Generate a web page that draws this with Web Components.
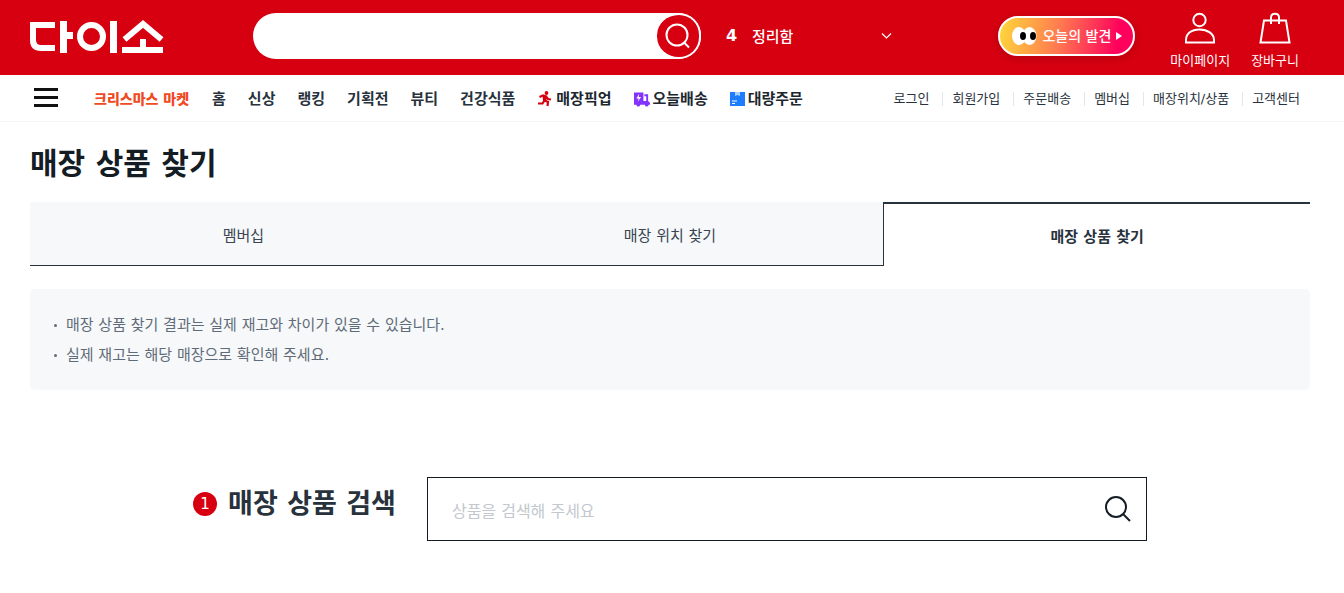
<!DOCTYPE html>
<html lang="ko">
<head>
<meta charset="utf-8">
<meta name="viewport" content="width=device-width, initial-scale=1">
<title>매장 상품 찾기 | 다이소</title>
<style>
body { margin: 0; background: #fff; color: #28323c; font: 15px/22px "DejaVu Sans", "Noto Sans CJK KR", sans-serif; }
</style>
</head>
<body>
<store-header></store-header>
<store-nav></store-nav>
<store-page heading="매장 상품 찾기">
  <page-tabs>
    <page-tab>멤버십</page-tab>
    <page-tab>매장 위치 찾기</page-tab>
    <page-tab current>매장 상품 찾기</page-tab>
  </page-tabs>
  <notice-box>
    <notice-line>매장 상품 찾기 결과는 실제 재고와 차이가 있을 수 있습니다.</notice-line>
    <notice-line>실제 재고는 해당 매장으로 확인해 주세요.</notice-line>
  </notice-box>
  <product-search step="1">매장 상품 검색</product-search>
</store-page>

<script>
const define = (name, markup, setup) => {
  const template = document.createElement('template');
  template.innerHTML = `<style>
    :host, * { box-sizing: border-box; }
    a { color: inherit; text-decoration: none; }
    button { font: inherit; color: inherit; background: none; border: 0; padding: 0; cursor: pointer; }
    svg { display: block; flex: none; }
  </style>` + markup;
  customElements.define(name, class extends HTMLElement {
    constructor() {
      super();
      this.attachShadow({ mode: 'open' }).append(template.content.cloneNode(true));
    }
    connectedCallback() { if (setup) setup(this, this.shadowRoot); }
  });
};

define('store-logo', `
  <style>:host { display: block; } svg { fill: none; stroke: #fff; stroke-width: 6; }</style>
  <a href="#" aria-label="다이소">
    <svg width="134" height="34" viewBox="0 0 134 34">
      <path d="M25 5H3V20Q3 28 11 28H25"/>
      <path d="M33.500 1V33M36 15.500H43" stroke-width="7"/>
      <circle cx="61.500" cy="16.500" r="11.500"/>
      <path d="M83.500 1V33" stroke-width="7"/>
      <path d="M94.500 19.500L113 4L131.500 19.500M92 30H133M113 19V28"/>
    </svg>
  </a>`);

define('header-shortcut', `
  <style>
    :host { display: block; }
    a { display: flex; flex-direction: column; align-items: center; gap: 8px; font-size: 13px; line-height: 18px; }
    ::slotted(svg) { display: block; }
  </style>
  <a href="#"><slot name="icon"></slot><span><slot></slot></span></a>`);

define('store-header', `
  <style>
    :host { display: flex; align-items: center; height: 75px; padding: 0 34px 0 30px; background: #d70011; color: #fff; }
    form { display: flex; flex: 0 1 448px; min-width: 160px; height: 46px; margin: 0 25px 4px 89px; background: #fff; border-radius: 23px; }
    store-logo { margin-bottom: 2px; }
    input { flex: 1; min-width: 0; border: 0; background: none; outline: 0; padding: 0 24px; font: inherit; }
    form button { flex: none; width: 44px; height: 46px; display: grid; place-items: center; background: #d70011; border: 2px solid #fff; border-left-width: 0; border-radius: 23px; }
    .rank { display: flex; align-items: center; width: 166px; margin-bottom: 3px; white-space: nowrap; }
    .rank b { width: 26px; font-size: 16px; }
    .rank a { flex: 1; font-family: "Noto Sans CJK KR", sans-serif; font-weight: 500; }
    .pill { display: flex; align-items: center; gap: 5px; height: 40px; margin: 0 35px 3px auto; padding: 0 11px 0 12px; border: 2px solid #fff; border-radius: 20px; background: linear-gradient(100deg, #ffd83a, #ff7850 45%, #ff005c 88%); box-shadow: 0 2px 10px rgba(100, 0, 0, .3); font-size: 14px; font-weight: 500; line-height: 20px; white-space: nowrap; }
    .shortcuts { display: flex; gap: 21px; margin: 6px 11px 0 0; white-space: nowrap; }
  </style>
  <store-logo></store-logo>
  <form role="search" onsubmit="return false">
    <input type="search" aria-label="검색어">
    <button aria-label="검색"><svg width="26" height="26" viewBox="0 0 26 26" fill="none" stroke="#fff" stroke-width="2"><circle cx="12" cy="12" r="10.500"/><path d="M18.500 19L24 24.500"/></svg></button>
  </form>
  <div class="rank"><b>4</b><a href="#">정리함</a>
    <button aria-label="인기 검색어 펼치기"><svg width="11" height="8" viewBox="0 0 11 8" fill="none" stroke="#fff" stroke-width="1.200"><path d="M1 1.500L5.500 6L10 1.500"/></svg></button>
  </div>
  <a class="pill" href="#">
    <svg width="25" height="20" viewBox="0 0 25 20"><ellipse cx="7" cy="10" rx="7" ry="9" fill="#fff"/><ellipse cx="17.500" cy="10" rx="7" ry="9" fill="#fff"/><ellipse cx="11" cy="10" rx="3" ry="4"/><ellipse cx="21" cy="10" rx="3" ry="4"/></svg>
    <span>오늘의 발견</span>
    <svg width="6" height="8" viewBox="0 0 6 8"><path d="M0 0L6 4L0 8Z" fill="#fff"/></svg>
  </a>
  <div class="shortcuts">
    <header-shortcut><svg slot="icon" width="32" height="32" viewBox="0 0 32 32" fill="none" stroke="#fff" stroke-width="2"><circle cx="15.500" cy="8" r="6.200"/><path d="M2 30.500V28C2 21.500 7.500 17.500 15.500 17.500S30 21.500 30 28V30.500Z"/></svg>마이페이지</header-shortcut>
    <header-shortcut><svg slot="icon" width="32" height="32" viewBox="0 0 32 32" fill="none" stroke="#fff" stroke-width="2"><path d="M5 8.500H27L30.500 30.500H1.500Z"/><path d="M12 12V5.500C12 .5 20 .5 20 5.500V12"/></svg>장바구니</header-shortcut>
  </div>`);

define('store-nav', `
  <style>
    :host { display: flex; align-items: center; height: 47px; padding: 2px 34px 0 30px; border-bottom: 1px solid #f4f5f7; white-space: nowrap; }
    .menu { margin: 0 36px 2px 4px; }
    nav { display: flex; align-items: center; gap: 22px; }
    nav a { font-weight: 700; }
    nav .event { margin-right: 1px; font-size: 14px; font-weight: 900; color: #f04a23; }
    nav .service { display: flex; align-items: center; gap: 3px; color: #1c2730; }
    ul { display: flex; margin: 0 0 0 auto; padding: 0; list-style: none; font-size: 13px; line-height: 14px; }
    li { padding: 0 13px 0 9px; }
    li + li { border-left: 1px solid #e3e6ea; }
    li:last-child { padding-right: 10px; }
  </style>
  <button class="menu" aria-label="전체 메뉴"><svg width="24" height="20" viewBox="0 0 24 20"><path d="M0 0H24V3H0ZM0 8H24V11H0ZM0 16H24V19H0Z" fill="#111"/></svg></button>
  <nav>
    <a class="event" href="#">크리스마스 마켓</a>
    <a href="#">홈</a><a href="#">신상</a><a href="#">랭킹</a><a href="#">기획전</a><a href="#">뷰티</a><a href="#">건강식품</a>
    <a class="service" href="#"><svg width="16" height="16" viewBox="0 0 16 16"><circle cx="9.500" cy="2" r="1.900" fill="#d70011"/><path d="M2.500 6L6 4.500L9 5.500L7.500 9.500L11 11L10.500 15M9 5.500L11 8L14 8.500M7.500 9.500L5.500 12.500L1 12.500" fill="none" stroke="#d70011" stroke-width="2.200"/><path d="M5.500 4L10 5L9 11L6 10Z" fill="#d70011"/></svg>매장픽업</a>
    <a class="service" href="#"><svg width="16" height="16" viewBox="0 0 17 16"><path d="M0 1H10V10H13V5H11V3H15V10L17 12V14H15.500A2 2 0 0 1 11.500 14H6.500A2 2 0 0 1 2.500 14H0Z" fill="#8233ff"/><path d="M5.500 2.500L2.500 7.500H5L4 11L7.500 6H5Z" fill="#fff"/></svg>오늘배송</a>
    <a class="service" href="#"><svg width="15" height="16" viewBox="0 0 15 16"><path d="M0 1H15V15H0Z" fill="#1e7cff"/><path d="M5 1H10V5L7.500 4L5 5Z" fill="#a9d0ff"/><path d="M2 10H7M2 12.500H5" stroke="#fff"/></svg>대량주문</a>
  </nav>
  <ul>
    <li><a href="#">로그인</a></li><li><a href="#">회원가입</a></li><li><a href="#">주문배송</a></li><li><a href="#">멤버십</a></li><li><a href="#">매장위치/상품</a></li><li><a href="#">고객센터</a></li>
  </ul>`);

define('store-page', `
  <style>
    :host { display: block; padding: 20px 34px 52px 30px; }
    h1 { margin: 0 0 16px; font-size: 30px; line-height: 44px; color: #141c24; }
  </style>
  <main><h1></h1><slot></slot></main>`,
  (host, root) => { root.querySelector('h1').textContent = host.getAttribute('heading'); });

define('page-tabs', `
  <style>:host { display: block; } nav { display: grid; grid-template-columns: repeat(3, 1fr); }</style>
  <nav><slot></slot></nav>`);

define('page-tab', `
  <style>
    :host { display: block; }
    a { display: grid; place-items: center; height: 64px; background: #f6f8fa; border-bottom: 1px solid #28323c; padding-top: 4px; color: #3a4552; }
    :host([current]) a { background: #fff; border: solid #28323c; border-width: 2px 0 0 1px; color: #28323c; font-weight: 700; }
  </style>
  <a href="#"><span><slot></slot></span></a>`);

define('notice-box', `
  <style>
    :host { display: block; margin-top: 23px; padding: 21px 20px 20px; background: #f6f8fa; border-radius: 5px; color: #5f6b78; }
  </style>
  <div role="list"><slot></slot></div>`);

define('notice-line', `
  <style>
    :host { display: flex; align-items: center; line-height: 30px; }
    :host::before { content: ""; width: 3px; height: 3px; margin: 0 9px 0 4px; border-radius: 50%; background: currentColor; }
  </style>
  <span role="listitem"><slot></slot></span>`);

define('product-search', `
  <style>
    :host { display: block; margin-top: 87px; }
    form { display: flex; justify-content: center; align-items: center; }
    label { display: flex; align-items: center; gap: 11px; margin: 0 31px 10px 0; white-space: nowrap; font-size: 27px; font-weight: 700; line-height: 38px; }
    .step { display: grid; place-items: center; width: 24px; height: 24px; border-radius: 50%; background: #d70011; color: #fff; font-size: 15px; font-weight: 400; line-height: 24px; }
    .field { display: flex; align-items: center; flex: 0 1 720px; height: 64px; border: 1px solid #141c24; padding: 0 14px 0 24px; }
    input { flex: 1; min-width: 0; height: 60px; border: 0; outline: 0; padding: 4px 0 0; font: inherit; font-size: 16px; color: inherit; background: none; }
    input::placeholder { color: #c3c8ce; opacity: 1; }
  </style>
  <form role="search" onsubmit="return false">
    <label for="product"><span class="step"></span><span><slot></slot></span></label>
    <div class="field">
      <input id="product" type="text" placeholder="상품을 검색해 주세요">
      <button aria-label="상품 검색"><svg width="28" height="28" viewBox="0 0 28 28" fill="none" stroke="#141c24" stroke-width="2"><circle cx="12" cy="12" r="10"/><path d="M19 19L26 26"/></svg></button>
    </div>
  </form>`,
  (host, root) => { root.querySelector('.step').textContent = host.getAttribute('step'); });
</script>
</body>
</html>
